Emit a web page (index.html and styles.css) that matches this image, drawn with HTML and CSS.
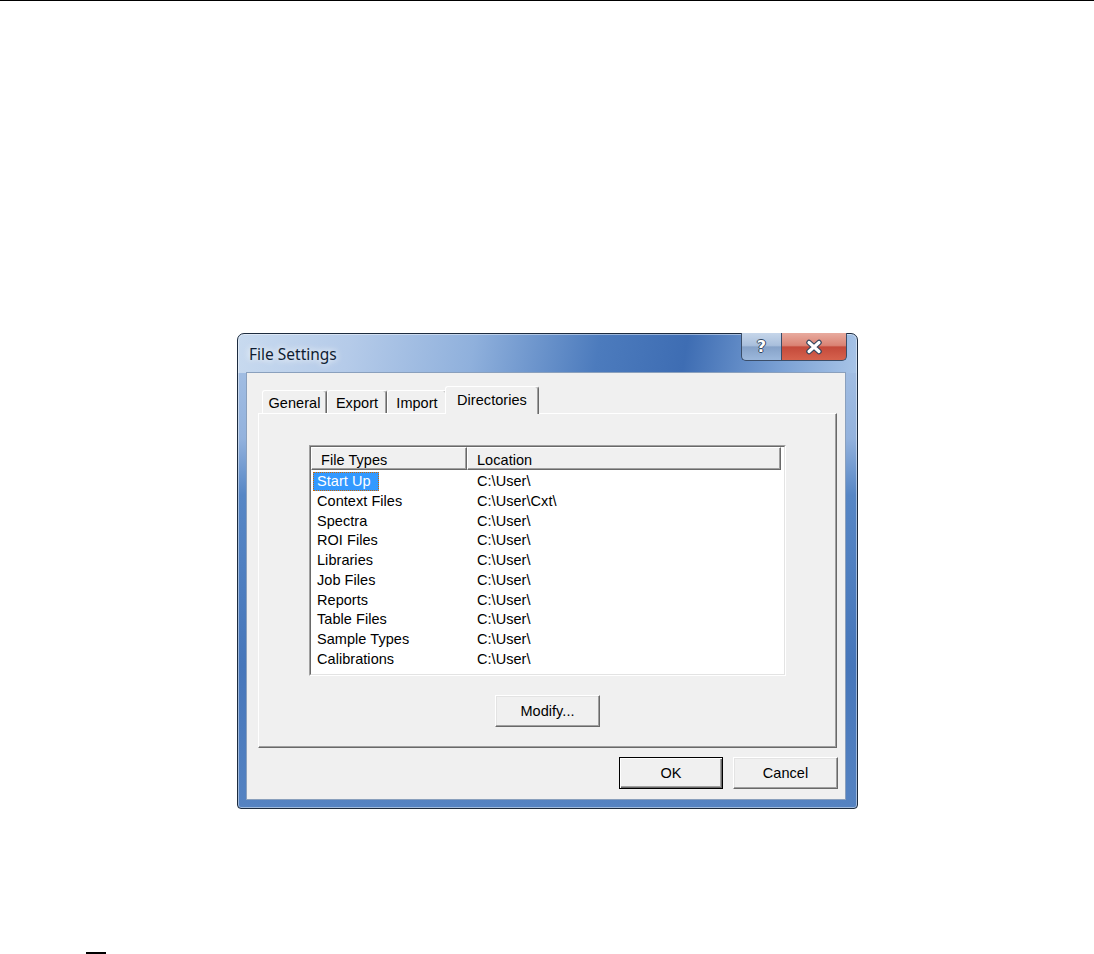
FILE: index.html
```html
<!DOCTYPE html>
<html lang="en">
<head>
  <meta charset="UTF-8" />
  <title>File Settings</title>
  <link rel="stylesheet" href="styles.css">
</head>
<body>
  <div class="top-rule"></div>

  <div class="window">
    <div class="titlebar">
      <span class="title">File Settings</span>
      <div class="caption-buttons">
        <div class="cap-btn help"><span>?</span></div>
        <div class="cap-btn close">
          <svg width="20" height="16" viewBox="0 0 20 16">
            <path d="M5 3.5 L15 12.5 M15 3.5 L5 12.5" stroke="#34465e" stroke-width="5.5" stroke-linecap="round" fill="none"/>
            <path d="M5 3.5 L15 12.5 M15 3.5 L5 12.5" stroke="#fff" stroke-width="3.2" stroke-linecap="round" fill="none"/>
          </svg>
        </div>
      </div>
    </div>

    <div class="client">
      <div class="tabs">
        <div class="tab general">General</div>
        <div class="tab export">Export</div>
        <div class="tab import">Import</div>
        <div class="tab active">Directories</div>
      </div>

      <div class="tab-panel">
        <div class="listview">
          <div class="list-inner">
            <div class="list-header">
              <div class="col-head col-type">File Types</div>
              <div class="col-head col-loc">Location</div>
              <div class="col-rest"></div>
            </div>
            <div class="list-rows">
              <div class="row selected"><div class="cell col-type"><span class="label">Start Up</span></div><div class="cell col-loc">C:\User\</div></div>
              <div class="row"><div class="cell col-type"><span class="label">Context Files</span></div><div class="cell col-loc">C:\User\Cxt\</div></div>
              <div class="row"><div class="cell col-type"><span class="label">Spectra</span></div><div class="cell col-loc">C:\User\</div></div>
              <div class="row"><div class="cell col-type"><span class="label">ROI Files</span></div><div class="cell col-loc">C:\User\</div></div>
              <div class="row"><div class="cell col-type"><span class="label">Libraries</span></div><div class="cell col-loc">C:\User\</div></div>
              <div class="row"><div class="cell col-type"><span class="label">Job Files</span></div><div class="cell col-loc">C:\User\</div></div>
              <div class="row"><div class="cell col-type"><span class="label">Reports</span></div><div class="cell col-loc">C:\User\</div></div>
              <div class="row"><div class="cell col-type"><span class="label">Table Files</span></div><div class="cell col-loc">C:\User\</div></div>
              <div class="row"><div class="cell col-type"><span class="label">Sample Types</span></div><div class="cell col-loc">C:\User\</div></div>
              <div class="row"><div class="cell col-type"><span class="label">Calibrations</span></div><div class="cell col-loc">C:\User\</div></div>
            </div>
          </div>
        </div>
        <div class="panel-actions">
          <button class="btn modify">Modify...</button>
        </div>
      </div>

      <div class="dialog-actions">
        <button class="btn default">OK</button>
        <button class="btn cancel">Cancel</button>
      </div>
    </div>
  </div>

  <div class="page-mark"></div>
</body>
</html>
```

FILE: styles.css
```css
html, body {
  margin: 0;
  padding: 0;
  background: #fff;
}

body {
  font-family: "Liberation Sans", Arial, sans-serif;
  font-size: 14.5px;
  letter-spacing: 0.05px;
  color: #000;
  height: 954px;
  overflow: hidden;
}

.top-rule {
  height: 1px;
  background: #000;
}

/* window frame */
.window {
  box-sizing: border-box;
  width: 621px;
  margin: 332px 0 0 237px;
  padding: 0 11px 8px 8px;
  border: 1px solid #1d2c3f;
  border-radius: 7px 7px 4px 4px;
  background:
    linear-gradient(100deg, #c8daef 0%, #b5cbe9 18%, #8fb0dc 38%, #4c7bbd 58%, #3e6db3 72%, #7ca2d5 88%, #a8c4e7 100%) top / 100% 39px no-repeat,
    linear-gradient(180deg, #a9c3e5 0%, #93b2dd 22%, #5686c5 34%, #4676ba 70%, #5583c2 100%);
  box-shadow: inset 0 0 0 1px rgba(255, 255, 255, 0.45);
}

.titlebar {
  display: flex;
  justify-content: space-between;
  align-items: flex-start;
  height: 38px;
}

.title {
  font-family: "Noto Sans", sans-serif;
  font-size: 15.5px;
  line-height: 21px;
  letter-spacing: 0;
  padding: 10px 0 0 3px;
  color: #0f1d33;
  text-shadow: 0 0 6px #fff, 0 0 10px rgba(255, 255, 255, 0.7);
}

.caption-buttons {
  display: flex;
  margin: -1px -1px 0 0;
}

.cap-btn {
  box-sizing: border-box;
  height: 28px;
  display: flex;
  align-items: center;
  justify-content: center;
  border: 1px solid #3a4d68;
  border-top: none;
}

.cap-btn.help {
  width: 40px;
  border-right: none;
  border-radius: 0 0 0 5px;
  background: linear-gradient(180deg, #c6d6ea 0%, #a9bfdc 46%, #86a2c8 52%, #9cb8dc 100%);
}

.cap-btn.help span {
  font-family: "DejaVu Sans", sans-serif;
  font-weight: bold;
  font-size: 16px;
  line-height: 16px;
  color: #fff;
  text-shadow: -1px 0 #34465e, 1px 0 #34465e, 0 -1px #34465e, 0 1px #34465e;
}

.cap-btn.close {
  width: 66px;
  border-radius: 0 0 5px 0;
  background: linear-gradient(180deg, #e8ab9f 0%, #da8374 46%, #c44a3b 52%, #d6624d 100%);
}

/* dialog client area */
.client {
  box-sizing: border-box;
  background: #f0f0f0;
  border: 1px solid #8aa0bd;
  padding: 13px 8px 10px 11px;
}

.tabs {
  display: flex;
  align-items: flex-end;
  height: 27px;
  padding-left: 4px;
}

.tab {
  box-sizing: border-box;
  height: 23px;
  padding-top: 3px;
  line-height: 18px;
  text-align: center;
  border: 1px solid #fff;
  border-right-color: #696969;
  border-bottom: none;
  border-radius: 3px 3px 0 0;
  box-shadow: inset -1px 0 0 #a0a0a0;
}

.tab.general { width: 65px; }
.tab.export { width: 60px; }
.tab.import { width: 60px; }

.tab.active {
  width: 94px;
  height: 28px;
  padding-top: 4px;
  margin: 0 -2px -1px -2px;
  position: relative;
  z-index: 1;
  background: #f0f0f0;
}

.tab-panel {
  box-sizing: border-box;
  height: 335px;
  padding-top: 31px;
  border: 1px solid;
  border-color: #fff #696969 #696969 #fff;
  box-shadow: inset -1px -1px 0 #a0a0a0;
}

/* list view */
.listview {
  box-sizing: border-box;
  width: 477px;
  height: 231px;
  margin: 0 auto;
  border: 1px solid;
  border-color: #a0a0a0 #fff #fff #a0a0a0;
}

.list-inner {
  box-sizing: border-box;
  height: 100%;
  background: #fff;
  border: 1px solid;
  border-color: #696969 #e3e3e3 #e3e3e3 #696969;
}

.list-header {
  display: flex;
  height: 23px;
}

.col-head {
  box-sizing: border-box;
  padding: 3px 0 0 9px;
  line-height: 18px;
  background: #f0f0f0;
  border: 1px solid;
  border-color: #fff #696969 #696969 #fff;
  box-shadow: inset -1px -1px 0 #a0a0a0;
}

.col-head.col-type { width: 156px; }
.col-head.col-loc { width: 314px; }
.col-rest { flex: 1; }

.list-rows {
  padding-top: 2px;
}

.row {
  display: flex;
  height: 19.75px;
  line-height: 19px;
}

.cell.col-type {
  box-sizing: border-box;
  width: 156px;
  padding-left: 2px;
}

.cell.col-loc {
  padding-left: 10px;
}

.label {
  display: inline-block;
  padding: 0 8px 0 4px;
}

.row.selected .label {
  background: #3399ff;
  color: #fff;
  outline: 1px dotted #cc6600;
  outline-offset: -1px;
}

/* buttons */
.btn {
  box-sizing: border-box;
  height: 32px;
  padding: 0;
  font: inherit;
  letter-spacing: inherit;
  color: #000;
  background: #f0f0f0;
  border: 1px solid;
  border-color: #fff #696969 #696969 #fff;
  border-radius: 0;
  box-shadow: inset -1px -1px 0 #a0a0a0, inset 1px 1px 0 #e3e3e3;
}

.btn.default {
  border-color: #000;
  box-shadow: inset 1px 1px 0 #fff, inset -1px -1px 0 #696969, inset -2px -2px 0 #a0a0a0;
}

.panel-actions {
  display: flex;
  justify-content: center;
  margin-top: 19px;
}

.btn.modify { width: 105px; }

.dialog-actions {
  display: flex;
  justify-content: flex-end;
  gap: 10px;
  margin: 9px -1px 0 0;
}

.btn.default { width: 104px; }
.btn.cancel { width: 105px; }

.page-mark {
  width: 20px;
  height: 2px;
  margin: 143px 0 0 86px;
  background: #000;
}
```
